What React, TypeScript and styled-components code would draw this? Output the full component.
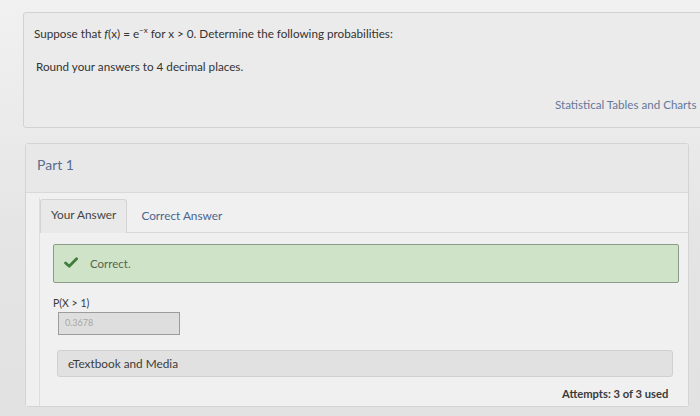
import React from "react";
import styled, { createGlobalStyle } from "styled-components";

const Global = createGlobalStyle`
  html, body {
    margin: 0;
    padding: 0;
    width: 700px;
    height: 416px;
    overflow: hidden;
    background: linear-gradient(180deg, #f1f1f1 0%, #e4e4e4 60%, #e2e2e2 100%);
    font-family: Lato, "Open Sans", sans-serif;
    color: #3a3a3a;
  }
`;

export default function App() {
  return (
    <>
      <Global />
      <Page>
        <QuestionCard>
          <Prompt>
            Suppose that <i>f</i>(x) = e<sup>−x</sup> for x &gt; 0. Determine the following probabilities:
          </Prompt>
          <Prompt $top={17} $indent={2}>
            Round your answers to 4 decimal places.
          </Prompt>
          <ResourceLink>Statistical Tables and Charts</ResourceLink>
        </QuestionCard>

        <PartCard>
          <PartHeader>Part 1</PartHeader>
          <PartBody>
            <Tabs>
              <Tab $active>Your Answer</Tab>
              <Tab>Correct Answer</Tab>
            </Tabs>
            <Panel>
              <Feedback>
                <svg width="14" height="11" viewBox="0 0 14 11">
                  <path
                    d="M1.6 6 L5.2 9.2 L12.6 1.8"
                    fill="none"
                    stroke="#3f7d3c"
                    strokeWidth="2.8"
                    strokeLinecap="round"
                    strokeLinejoin="round"
                  />
                </svg>
                <span>Correct.</span>
              </Feedback>
              <FieldLabel>P(X &gt; 1)</FieldLabel>
              <AnswerInput>0.3678</AnswerInput>
              <MediaBar>eTextbook and Media</MediaBar>
              <Attempts>Attempts: 3 of 3 used</Attempts>
            </Panel>
          </PartBody>
        </PartCard>
      </Page>
    </>
  );
}

const Page = styled.div`
  display: flex;
  flex-direction: column;
  padding: 12px 0 0 23px;
  gap: 15px;
`;

const QuestionCard = styled.section`
  width: 700px;
  height: 116px;
  box-sizing: border-box;
  padding: 12px 10px 0 10px;
  background: #ebebeb;
  border: 1px solid #d2d2d2;
  border-radius: 3px;
  display: flex;
  flex-direction: column;
`;

const Prompt = styled.p<{ $top?: number; $indent?: number }>`
  margin: ${(p) => p.$top ?? 0}px 0 0 ${(p) => p.$indent ?? 0}px;
  font-size: 11.7px;
  line-height: 16px;
  color: #333;

  i {
    font-style: italic;
  }
  sup {
    font-size: 8px;
    line-height: 0;
  }
`;

const ResourceLink = styled.a`
  margin: 24px 0 0 521px;
  font-size: 11.6px;
  color: #66779a;
  white-space: nowrap;
`;

const PartCard = styled.section`
  width: 664px;
  margin-left: 2px;
  height: 264px;
  box-sizing: border-box;
  background: #eeeeee;
  border: 1px solid #d4d4d4;
  border-radius: 3px;
  display: flex;
  flex-direction: column;
`;

const PartHeader = styled.h2`
  margin: 0;
  height: 49px;
  box-sizing: border-box;
  padding: 12px 0 0 11px;
  font-size: 14px;
  font-weight: 400;
  color: #586d90;
  border-bottom: 1px solid #d9d9d9;
  background: #e8e8e8;
`;

const PartBody = styled.div`
  flex: 1;
  padding: 5px 0 0 13px;
  display: flex;
  flex-direction: column;
  background: #f0f0f0;
`;

const Tabs = styled.div`
  display: flex;
  align-items: flex-end;
  gap: 2px;
  height: 34px;
  border-bottom: 1px solid #d8d8d8;
  border-left: 1px solid #dedede;
`;

const Tab = styled.div<{ $active?: boolean }>`
  height: ${(p) => (p.$active ? 34 : 30)}px;
  box-sizing: border-box;
  padding: ${(p) => (p.$active ? "7px 10px 0 10px" : "5px 10px 0 12px")};
  font-size: 11.8px;
  color: ${(p) => (p.$active ? "#444" : "#4a6590")};
  background: ${(p) => (p.$active ? "#e9e9e9" : "transparent")};
  border: ${(p) => (p.$active ? "1px solid #d3d3d3" : "none")};
  border-bottom: none;
  border-radius: 3px 3px 0 0;
  margin-bottom: -1px;
`;

const Panel = styled.div`
  flex: 1;
  display: flex;
  flex-direction: column;
  padding: 11px 0 0 13px;
  border-left: 1px solid #dedede;
`;

const Feedback = styled.div`
  width: 626px;
  height: 39px;
  box-sizing: border-box;
  display: flex;
  align-items: center;
  gap: 12px;
  padding: 0 0 0 10px;
  background: #cfe3c9;
  border: 1px solid #8e9b8b;
  border-radius: 2px;
  font-size: 11.5px;
  color: #56634f;

  svg {
    margin-top: -3px;
  }
`;

const FieldLabel = styled.div`
  margin: 14px 0 0 0;
  font-size: 10.5px;
  color: #3a3a3a;
`;

const AnswerInput = styled.div`
  margin: 3px 0 0 5px;
  width: 122px;
  height: 23px;
  box-sizing: border-box;
  padding: 4px 0 0 6px;
  background: #dedede;
  border: 1px solid #9c9c9c;
  font-size: 9px;
  color: #a8a8a8;
`;

const MediaBar = styled.div`
  margin: 15px 0 0 4px;
  width: 616px;
  height: 27px;
  box-sizing: border-box;
  padding: 5px 0 0 10px;
  background: #e1e1e1;
  border: 1px solid #d0d0d0;
  border-radius: 3px;
  font-size: 11.8px;
  color: #3c3c3c;
`;

const Attempts = styled.div`
  margin: 10px 0 0 509px;
  font-size: 11.2px;
  font-weight: 700;
  color: #3a3a3a;
  white-space: nowrap;
`;
